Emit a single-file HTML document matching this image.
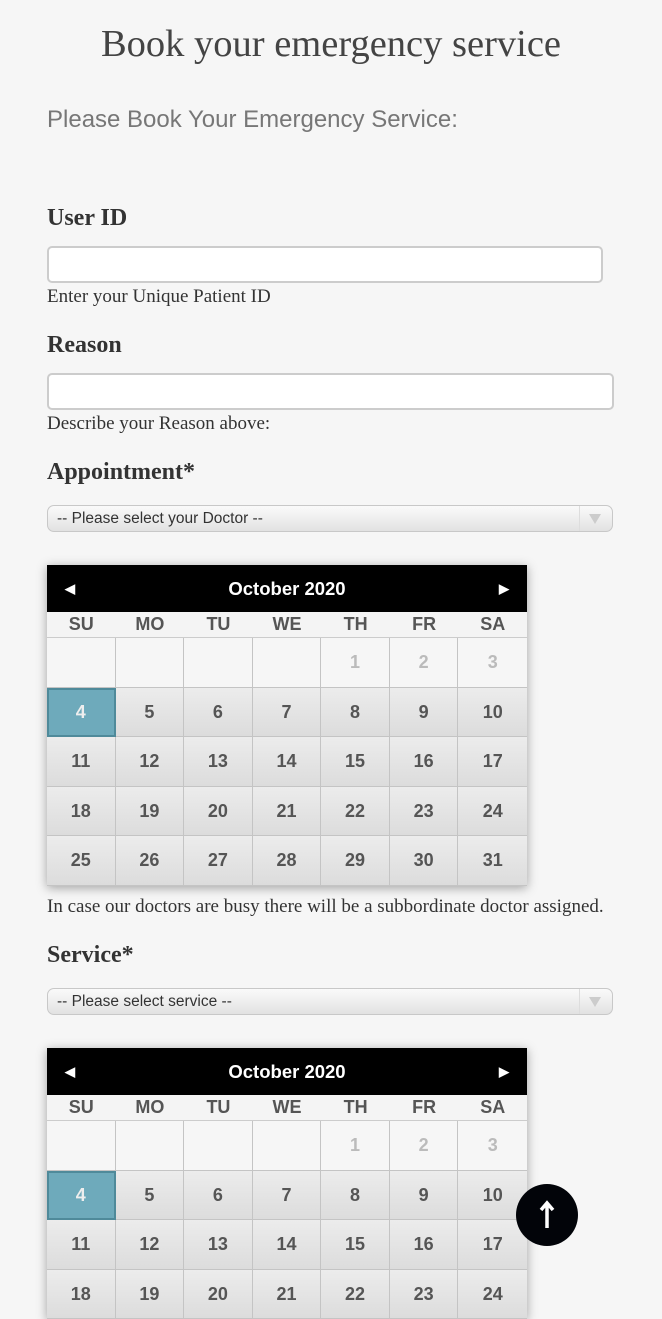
<!DOCTYPE html><html><head><style>
body{margin:0;background:#f6f6f6;width:662px;height:1280px;overflow:hidden;position:relative;font-family:"Liberation Serif",serif;color:#333}
.a{position:absolute}
h1{position:absolute;top:22px;left:0;width:662px;text-align:center;margin:0;font-weight:normal;font-size:38.5px;color:#444}
.lbl{font-weight:bold;font-size:24px;color:#333}
.inp{background:#fff;border:2px solid #ccc;border-radius:5px;height:32px;box-sizing:border-box}
.help{font-size:19px;color:#333}
.sel{left:47px;width:566px;height:27px;border:1px solid #c8c8c8;border-radius:7px;background:linear-gradient(#fafafa,#e2e2e2);box-sizing:border-box;font-family:"Liberation Sans",sans-serif;font-size:15.5px;color:#333;line-height:25px;padding-left:9px}
.sel:after{content:"";position:absolute;right:0;top:0;width:32px;height:25px;border-left:1px solid #ddd}
.sel i{position:absolute;right:11px;top:8px;border-left:6px solid transparent;border-right:6px solid transparent;border-top:10px solid #ccc}
.cal{left:47px;width:480px;box-shadow:0 2px 10px rgba(0,0,0,.35);font-family:"Liberation Sans",sans-serif;background:#f5f5f5}
.hd{height:47px;background:#000;color:#fff;font-weight:bold;font-size:18.5px;text-align:center;line-height:47px;position:relative}
.hd span{position:absolute;top:0;font-size:13px}
.dn{display:flex;height:25px;background:#f4f4f4;border-bottom:1px solid #ccc}
.dn div{flex:1;text-align:center;font-weight:bold;font-size:18px;color:#555;line-height:25px}
.g{display:grid;grid-template-columns:repeat(7,1fr)}
.g div{height:48.6px;border-right:1px solid #c4c4c4;border-bottom:1px solid #c4c4c4;text-align:center;line-height:49px;font-weight:bold;font-size:18px;color:#555;background:linear-gradient(#ececec,#dcdcdc)}
.g div:nth-child(7n){border-right:none}
.g .e{background:#f6f6f6}.g .m{background:#f6f6f6;color:#bbb}
.g .s{background:#6eaabb;color:#eee;outline:2px solid #4f8a9a;outline-offset:-2px}
</style></head><body>
<h1>Book your emergency service</h1>
<div class="a" style="top:106px;left:47px;font-family:'Liberation Sans',sans-serif;font-size:24px;color:#777">Please Book Your Emergency Service:</div>
<div class="a lbl" style="top:205px;left:47px">User ID</div>
<div class="a inp" style="top:246px;left:47px;width:556px;height:37px"></div>
<div class="a help" style="top:286px;left:47px">Enter your Unique Patient ID</div>
<div class="a lbl" style="top:332px;left:47px">Reason</div>
<div class="a inp" style="top:373px;left:47px;width:567px;height:37px"></div>
<div class="a help" style="top:413px;left:47px">Describe your Reason above:</div>
<div class="a lbl" style="top:459px;left:47px">Appointment*</div>
<div class="a sel" style="top:505px">-- Please select your Doctor --<i></i></div>
<div class="a cal" style="top:565px">
<div class="hd"><span style="left:18px">◀</span>October 2020<span style="right:18px">▶</span></div>
<div class="dn"><div>SU</div><div>MO</div><div>TU</div><div>WE</div><div>TH</div><div>FR</div><div>SA</div></div>
<div class="g"><div class="e"></div><div class="e"></div><div class="e"></div><div class="e"></div><div class="m">1</div><div class="m">2</div><div class="m">3</div><div class="s">4</div><div>5</div><div>6</div><div>7</div><div>8</div><div>9</div><div>10</div><div>11</div><div>12</div><div>13</div><div>14</div><div>15</div><div>16</div><div>17</div><div>18</div><div>19</div><div>20</div><div>21</div><div>22</div><div>23</div><div>24</div><div>25</div><div>26</div><div>27</div><div>28</div><div>29</div><div>30</div><div>31</div></div>
</div>
<div class="a help" style="top:896px;left:47px">In case our doctors are busy there will be a subbordinate doctor assigned.</div>
<div class="a lbl" style="top:942px;left:47px">Service*</div>
<div class="a sel" style="top:988px">-- Please select service --<i></i></div>
<div class="a cal" style="top:1048px">
<div class="hd"><span style="left:18px">◀</span>October 2020<span style="right:18px">▶</span></div>
<div class="dn"><div>SU</div><div>MO</div><div>TU</div><div>WE</div><div>TH</div><div>FR</div><div>SA</div></div>
<div class="g"><div class="e"></div><div class="e"></div><div class="e"></div><div class="e"></div><div class="m">1</div><div class="m">2</div><div class="m">3</div><div class="s">4</div><div>5</div><div>6</div><div>7</div><div>8</div><div>9</div><div>10</div><div>11</div><div>12</div><div>13</div><div>14</div><div>15</div><div>16</div><div>17</div><div>18</div><div>19</div><div>20</div><div>21</div><div>22</div><div>23</div><div>24</div></div>
</div>
<div class="a" style="top:1184px;left:516px;width:62px;height:62px;border-radius:50%;background:#020409">
<svg width="62" height="62"><path d="M31 44V20M25 26l6-7 6 7" stroke="#fff" stroke-width="3.5" fill="none"/></svg></div>
</body></html>
